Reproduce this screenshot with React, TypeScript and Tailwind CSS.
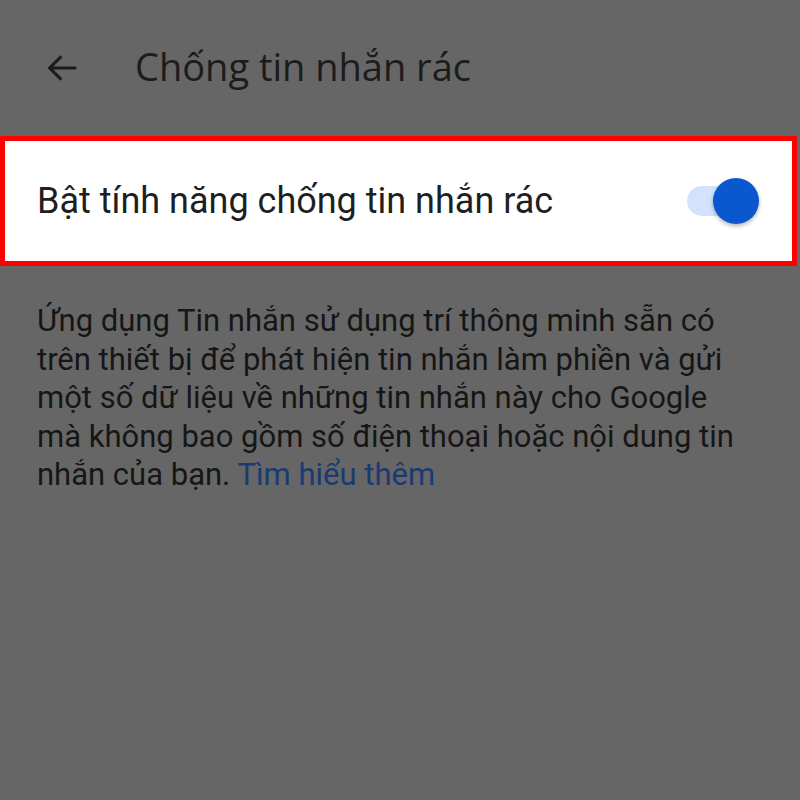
export default function App() {
  return (
    <div className="w-[800px] h-[800px] bg-[#666666] font-['Roboto',sans-serif] overflow-hidden">
      {/* top bar */}
      <div className="h-[136px] flex items-center">
        <div className="w-[135px] flex items-center pl-[43px]">
          <svg width="40" height="40" viewBox="0 0 24 24" fill="none" stroke="#1c1c1c" strokeWidth="1.9">
            <path d="M20 12H4.5M11 5l-7 7 7 7" />
          </svg>
        </div>
        <h1 className="text-[38px] text-[#1c1c1c] -mt-[4px] font-['Open_Sans',sans-serif]">Chống tin nhắn rác</h1>
      </div>

      {/* highlighted toggle row */}
      <div className="w-[797px] h-[130px] border-[5px] border-[#ff0000] bg-white flex items-center justify-between pl-[32px] pr-[33px]">
        <span className="text-[36px] text-[#1f1f1f]">Bật tính năng chống tin nhắn rác</span>
        <div className="relative w-[72px] h-[46px] flex items-center">
          <div className="w-[58px] h-[30px] rounded-full bg-[#d3e3fd]" />
          <div className="absolute right-0 top-0 w-[46px] h-[46px] rounded-full bg-[#0b57d0] shadow-[0_2px_4px_rgba(0,0,0,0.3)]" />
        </div>
      </div>

      {/* description */}
      <p className="w-[750px] pl-[37px] pt-[36px] text-[31px] leading-[38.5px] text-[#161616]">
        Ứng dụng Tin nhắn sử dụng trí thông minh sẵn có trên thiết bị để phát hiện tin nhắn làm phiền và gửi một số dữ liệu về những tin nhắn này cho Google mà không bao gồm số điện thoại hoặc nội dung tin nhắn của bạn.{' '}
        <span className="text-[#1a3a70]">Tìm hiểu thêm</span>
      </p>
    </div>
  );
}
